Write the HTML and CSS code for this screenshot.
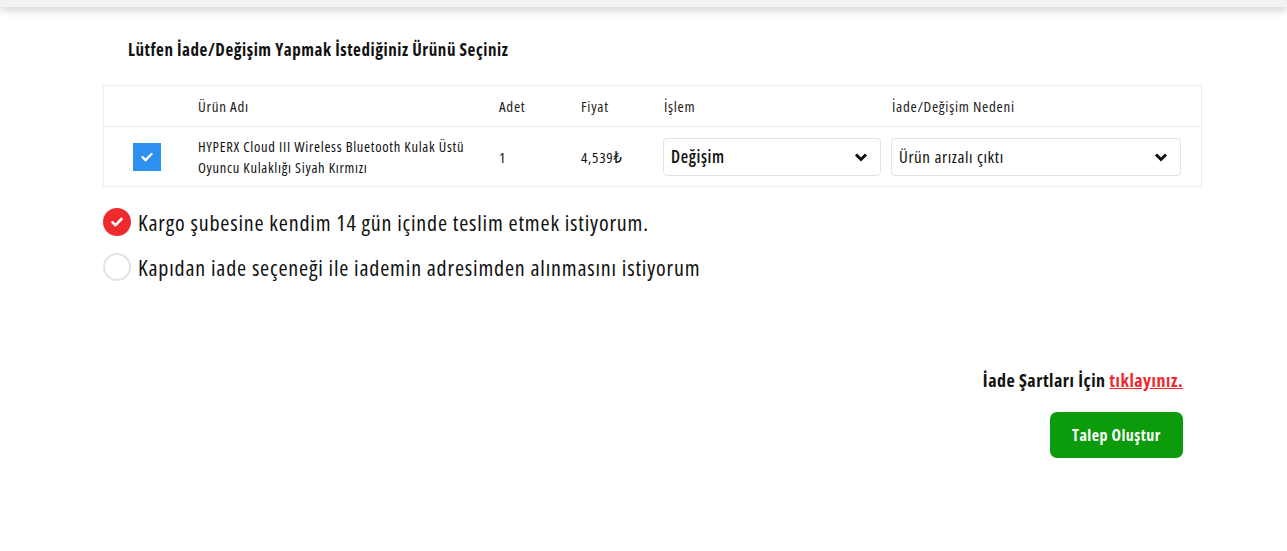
FILE: index.html
```html
<!DOCTYPE html>
<html lang="tr">
<head>
    <meta charset="UTF-8">
    <meta name="viewport" content="width=device-width, initial-scale=1.0">
    <title>İade / Değişim Talebi</title>
    <link rel="stylesheet" href="styles.css">
</head>
<body>
    <div class="top-bar"></div>

    <div class="container">
        <h3 class="baslik">Lütfen İade/Değişim Yapmak İstediğiniz Ürünü Seçiniz</h3>

        <table class="urun-tablo">
            <thead>
                <tr>
                    <th class="col-sec"></th>
                    <th class="col-ad">Ürün Adı</th>
                    <th class="col-adet">Adet</th>
                    <th class="col-fiyat">Fiyat</th>
                    <th class="col-islem">İşlem</th>
                    <th class="col-neden">İade/Değişim Nedeni</th>
                </tr>
            </thead>
            <tbody>
                <tr>
                    <td class="col-sec">
                        <span class="kutu">
                            <svg width="14" height="14" viewBox="0 0 14 14"><path d="M2.5 7.2 L5.6 10.2 L11.5 4" fill="none" stroke="#fff" stroke-width="2.4" stroke-linecap="round" stroke-linejoin="round"/></svg>
                        </span>
                    </td>
                    <td class="col-ad">HYPERX Cloud III Wireless Bluetooth Kulak Üstü Oyuncu Kulaklığı Siyah Kırmızı</td>
                    <td>1</td>
                    <td>4,539₺</td>
                    <td>
                        <div class="secim">
                            <span>Değişim</span>
                            <svg width="14" height="10" viewBox="0 0 14 10"><path d="M2 2.5 L7 7.5 L12 2.5" fill="none" stroke="#111" stroke-width="3"/></svg>
                        </div>
                    </td>
                    <td>
                        <div class="secim">
                            <span class="normal">Ürün arızalı çıktı</span>
                            <svg width="14" height="10" viewBox="0 0 14 10"><path d="M2 2.5 L7 7.5 L12 2.5" fill="none" stroke="#111" stroke-width="3"/></svg>
                        </div>
                    </td>
                </tr>
            </tbody>
        </table>

        <div class="secenekler">
            <label class="secenek">
                <span class="radyo aktif">
                    <svg width="16" height="16" viewBox="0 0 16 16"><path d="M3.5 8.2 L6.6 11.2 L12.5 5" fill="none" stroke="#fff" stroke-width="2.6" stroke-linecap="round" stroke-linejoin="round"/></svg>
                </span>
                Kargo şubesine kendim 14 gün içinde teslim etmek istiyorum.
            </label>
            <label class="secenek">
                <span class="radyo"></span>
                Kapıdan iade seçeneği ile iademin adresimden alınmasını istiyorum
            </label>
        </div>

        <div class="alt">
            <p class="sartlar">İade Şartları İçin <a href="#">tıklayınız.</a></p>
            <button class="btn-talep">Talep Oluştur</button>
        </div>
    </div>
</body>
</html>
```

FILE: styles.css
```css
body {
    margin: 0;
    font-family: 'Open Sans', 'DejaVu Sans', sans-serif;
    font-stretch: 75%;
    color: #111;
    background: #fff;
}

.top-bar {
    height: 7px;
    background: #f2f2f2;
    box-shadow: 0 2px 10px rgba(0, 0, 0, 0.25);
}

.container {
    width: 1099px;
    margin: 0 auto;
    padding-left: 18px;
}

.baslik {
    margin: 31px 0 0 25px;
    font-size: 17px;
    letter-spacing: 0.55px;
    font-weight: bold;
    color: #111;
}

.urun-tablo {
    width: 100%;
    margin-top: 24px;
    table-layout: fixed;
    border-collapse: collapse;
    border: 1px solid #ececec;
    font-size: 15px;
    letter-spacing: 0.7px;
}

.urun-tablo th {
    text-align: left;
    font-weight: normal;
    height: 40px;
    padding: 0;
    border-bottom: 1px solid #ececec;
    color: #222;
}

.urun-tablo td {
    height: 59px;
    padding: 0;
    color: #111;
}

.col-sec { width: 94px; }
.urun-tablo td.col-sec { text-align: center; }
.col-ad { width: 301px; }
.urun-tablo td.col-ad { line-height: 21px; padding-right: 16px; font-size: 14.5px; }
.col-adet { width: 82px; }
.col-fiyat { width: 83px; }
.col-islem { width: 228px; }

.kutu {
    display: inline-flex;
    align-items: center;
    justify-content: center;
    width: 28px;
    height: 28px;
    background: #2d8ff0;
    margin-left: -8px;
    vertical-align: middle;
}

.secim {
    display: flex;
    align-items: center;
    justify-content: space-between;
    height: 36px;
    border: 1px solid #e2e2e2;
    border-radius: 4px;
    padding: 0 12px 0 7px;
    font-size: 17px;
    letter-spacing: 0.6px;
    font-weight: 600;
}

.urun-tablo td:nth-child(5) .secim { margin-left: -1px; margin-right: 11px; }
.urun-tablo td:nth-child(6) .secim { margin-left: -1px; margin-right: 20px; }

.secim .normal { font-weight: normal; }

.secenekler {
    margin-top: 20px;
}

.secenek {
    display: flex;
    align-items: center;
    gap: 7px;
    font-size: 22px;
    letter-spacing: 0.82px;
    height: 30px;
    margin-bottom: 15px;
    color: #111;
}

.radyo {
    display: inline-flex;
    align-items: center;
    justify-content: center;
    width: 24px;
    height: 24px;
    border: 2px solid #e3e3e3;
    border-radius: 50%;
    background: #fff;
}

.radyo.aktif {
    background: #ee2a2f;
    border-color: #ee2a2f;
}

.alt {
    display: flex;
    flex-direction: column;
    align-items: flex-end;
    padding-right: 19px;
    margin-top: 86px;
}

.sartlar {
    margin: 0;
    font-size: 18px;
    letter-spacing: 0.5px;
    font-weight: bold;
}

.sartlar a {
    color: #ee2a2f;
    text-decoration: underline;
}

.btn-talep {
    margin-top: 20px;
    width: 133px;
    height: 46px;
    background: #0b9b0b;
    color: #fff;
    border: none;
    border-radius: 7px;
    font-family: inherit;
    font-stretch: 75%;
    font-size: 16px;
    letter-spacing: 0.5px;
    font-weight: bold;
}
```
